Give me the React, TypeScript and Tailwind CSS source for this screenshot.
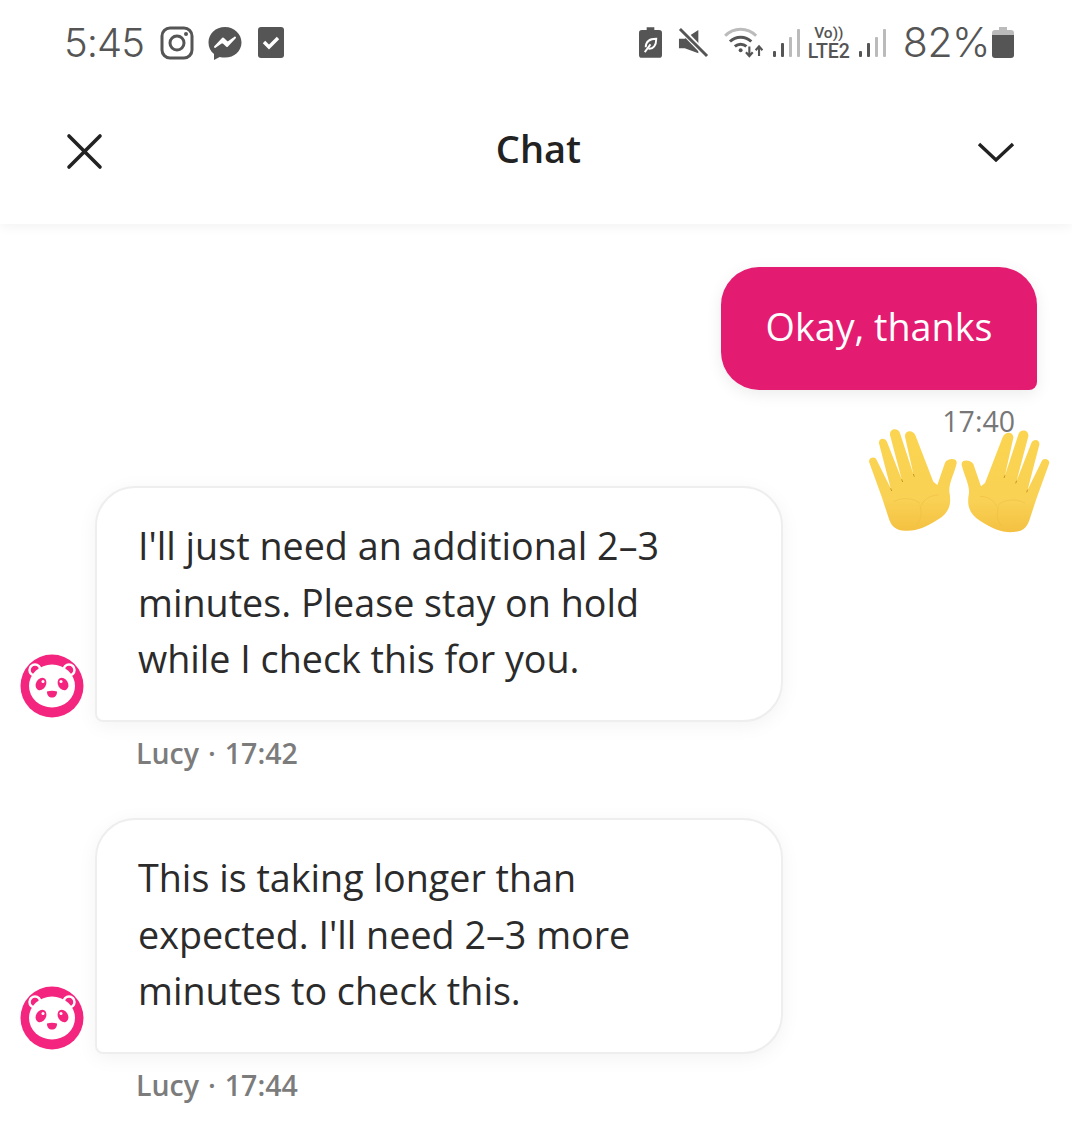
const openSans = "font-['Open_Sans',sans-serif]";

function Instagram() {
  return (
    <svg width="34" height="34" viewBox="0 0 34 34" fill="none" stroke="#555" strokeWidth="3">
      <rect x="2" y="2" width="30" height="30" rx="8" />
      <circle cx="17" cy="17" r="7" />
      <circle cx="26" cy="8" r="2" fill="#555" stroke="none" />
    </svg>
  );
}

function Messenger() {
  return (
    <svg width="36" height="36" viewBox="0 0 36 36">
      <path d="M18 2C8.600 2 1.500 8.800 1.500 17.500c0 4.700 2 8.700 5.500 11.500v6l5.700-3.100c1.700.5 3.400.7 5.300.7 9.400 0 16.500-6.800 16.500-15.100S27.400 2 18 2z" fill="#555" />
      <path d="M8 22l8-8.500 4.500 4.200L28 12.500l-8 8.500-4.500-4.200z" fill="#fff" stroke="#fff" strokeWidth="2" strokeLinejoin="round" />
    </svg>
  );
}

function CheckBox() {
  return (
    <svg width="28" height="33" viewBox="0 0 28 33">
      <rect x="1" y="1" width="26" height="31" rx="3" fill="#555" />
      <path d="M7 16l5 5 9-9" fill="none" stroke="#fff" strokeWidth="3.400" />
    </svg>
  );
}

function BatteryLeaf() {
  return (
    <svg width="23" height="33" viewBox="0 0 24 34">
      <path d="M8 1h8v3h5a3 3 0 0 1 3 3v23a3 3 0 0 1-3 3H3a3 3 0 0 1-3-3V7a3 3 0 0 1 3-3h5z" fill="#555" />
      <path d="M7 22c0-6 4-9 11-9 0 7-3 11-8 10.500M6 27l6-8" fill="none" stroke="#fff" strokeWidth="2" />
    </svg>
  );
}

function Muted() {
  return (
    <svg width="31" height="31" viewBox="0 0 32 32">
      <path d="M1 10h6l14-9v24L7 20H1z" fill="#555" transform="translate(0 2)" />
      <path d="M2 1l28 29" stroke="#fff" strokeWidth="6" />
      <path d="M2 2l28 28" stroke="#555" strokeWidth="3" />
    </svg>
  );
}

function Wifi() {
  return (
    <svg width="41" height="31" viewBox="0 0 42 32" fill="none">
      <path d="M1 9c9-9 23-9 32 0" stroke="#bbb" strokeWidth="3" />
      <path d="M6 15c6-6 16-6 22 0M11 20c3.500-3 8.500-3 12 0" stroke="#555" strokeWidth="3" />
      <circle cx="17" cy="24" r="2" fill="#555" />
      <path d="M26 20v10M22.500 26l3.500 4 3.500-4M36 30V20M32.500 24l3.500-4 3.500 4" stroke="#555" strokeWidth="2.200" />
    </svg>
  );
}

function Signal() {
  return (
    <svg width="28" height="30" viewBox="0 0 28 30">
      <rect x="1" y="23" width="3" height="6" rx="1" fill="#555" />
      <rect x="9" y="15" width="3" height="14" rx="1" fill="#555" />
      <rect x="17" y="9" width="3" height="20" rx="1" fill="#bbb" />
      <rect x="25" y="1" width="3" height="28" rx="1" fill="#bbb" />
    </svg>
  );
}

function BatteryLevel() {
  return (
    <svg width="22" height="31" viewBox="0 0 22 31">
      <path d="M7 0h8v3h4a3 3 0 0 1 3 3v3H0V6a3 3 0 0 1 3-3h4z" fill="#bbb" />
      <path d="M0 8h22v20a3 3 0 0 1-3 3H3a3 3 0 0 1-3-3z" fill="#555" />
    </svg>
  );
}

function StatusBar() {
  return (
    <div className="flex h-[85px] items-center justify-between pl-[64px] pr-[58px] font-['Inter',sans-serif] font-light text-[#555]">
      <div className="flex items-center">
        <span className="text-[40px] leading-none tracking-[-1px]">5:45</span>
        <span className="ml-[16px] flex"><Instagram /></span>
        <span className="ml-[13px] flex"><Messenger /></span>
        <span className="ml-[14px] flex"><CheckBox /></span>
      </div>
      <div className="flex items-center">
        <BatteryLeaf />
        <span className="ml-[16px] flex"><Muted /></span>
        <span className="ml-[15px] flex"><Wifi /></span>
        <span className="ml-[7px] flex"><Signal /></span>
        <div className="ml-[7px] flex w-[44px] flex-col items-center font-['Roboto',sans-serif] font-medium">
          <span className="text-[15.500px] leading-[18px]">Vo))</span>
          <span className="mt-[1px] text-[19.500px] leading-[18px]">LTE2</span>
        </div>
        <span className="ml-[7px] flex"><Signal /></span>
        <span className="ml-[17px] text-[41px] leading-none tracking-[-0.5px]">82%</span>
        <span className="ml-[2px] flex"><BatteryLevel /></span>
      </div>
    </div>
  );
}

function Header() {
  return (
    <header className="relative z-10 bg-white shadow-[0_2px_12px_rgba(0,0,0,0.06)]">
      <StatusBar />
      <div className="flex h-[139px] items-start justify-between pl-[66px] pr-[57px] pt-[48px]">
        <svg width="37" height="37" viewBox="0 0 37 37" fill="none" stroke="#222" strokeWidth="3.600" strokeLinecap="round">
          <path d="M3 3l31 31M34 3L3 34" />
        </svg>
        <span className={`${openSans} -mt-[8px] mr-[3px] text-[38px] font-semibold leading-[46px] text-[#222]`}>Chat</span>
        <svg className="mt-[8px]" width="38" height="22" viewBox="0 0 38 22" fill="none" stroke="#222" strokeWidth="3.400">
          <path d="M2 3l17 16L36 3" />
        </svg>
      </div>
    </header>
  );
}

function PandaAvatar() {
  return (
    <svg width="64" height="64" viewBox="0 0 64 64" className="shrink-0">
      <circle cx="32" cy="32" r="31.500" fill="#f4257f" />
      <circle cx="15" cy="16" r="5.500" fill="#f4257f" stroke="#fff" strokeWidth="2.500" />
      <circle cx="49" cy="16" r="5.500" fill="#f4257f" stroke="#fff" strokeWidth="2.500" />
      <ellipse cx="32" cy="32" rx="23" ry="21.500" fill="#fff" />
      <ellipse cx="21" cy="30" rx="5" ry="6.500" fill="#f4257f" transform="rotate(30 21 30)" />
      <ellipse cx="43" cy="30" rx="5" ry="6.500" fill="#f4257f" transform="rotate(-30 43 30)" />
      <circle cx="23" cy="27.500" r="1.500" fill="#fff" />
      <circle cx="41" cy="27.500" r="1.500" fill="#fff" />
      <path d="M27 37.500c3-1 7-1 10 0 0 4-2 6-5 6s-5-2-5-6z" fill="#f4257f" />
    </svg>
  );
}

function AgentMessage({ lines, time }: { lines: string[]; time: string }) {
  return (
    <div className="pl-5">
      <div className="flex items-end gap-[11px]">
        <div className="mb-[4px]">
          <PandaAvatar />
        </div>
        <div className="h-[236px] w-[688px] rounded-[40px] rounded-bl-[8px] border-2 border-[#eeeeee] bg-white pl-[41px] pt-[30px] text-[37.700px] leading-[56.500px] text-[#2b2b2b] shadow-[0_4px_20px_rgba(0,0,0,0.05)]">
          {lines.map((line) => (
            <div key={line}>{line}</div>
          ))}
        </div>
      </div>
      <div className="ml-[116px] mt-[12px] flex text-[28.500px] font-semibold leading-[38px] text-[#7c7c7c]">
        <span>Lucy</span>
        <span className="mx-[9px]">·</span>
        <span>{time}</span>
      </div>
    </div>
  );
}

function Hand() {
  return (
    <g>
      <path
        d="M57 245C57 232 75 228 80 240L122 325L87 190C85 172 108 172 112 188L155 298L120 165C118 143 146 142 150 160L190 282L165 170C163 150 190 148 197 168L250 305L262 315L285 248C292 235 322 232 320 250C315 275 296 310 298 335C306 375 295 400 265 418C230 442 195 455 165 452C140 452 125 440 118 420L95 350Z"
        fill="url(#handFill)"
      />
      <path d="M130 365c30-15 60-10 80 5M215 375c5-15 25-30 50-30M210 375c5 25 5 40-10 60" fill="none" stroke="#eebb42" strokeWidth="3" opacity="0.500" />
      <path d="M122 325l3 8M155 298l3 8M190 282l3 8" stroke="#b98a1f" strokeWidth="2.500" />
    </g>
  );
}

function Hands() {
  return (
    <svg className="absolute left-[850px] top-[380px]" width="222" height="170" viewBox="0 0 666 510">
      <defs>
        <linearGradient id="handFill" x1="0" y1="0" x2="0" y2="1">
          <stop offset="0" stopColor="#fbd550" />
          <stop offset="0.700" stopColor="#f9d154" />
          <stop offset="1" stopColor="#f4c142" />
        </linearGradient>
      </defs>
      <Hand />
      <g transform="translate(655 4) scale(-1 1)">
        <Hand />
      </g>
    </svg>
  );
}

export default function App() {
  return (
    <div className={`relative h-[1129px] w-[1072px] overflow-hidden bg-white ${openSans}`}>
      <Header />
      <main>
        <div className="flex flex-col items-end pr-[35px] pt-[43px]">
          <div className="flex h-[123px] w-[316px] items-center justify-center rounded-[38px] rounded-br-[8px] bg-[#e31c72] pb-[2px] text-[37.700px] text-white shadow-[0_4px_16px_rgba(0,0,0,0.08)]">
            Okay, thanks
          </div>
          <div className="mr-[22px] mt-[12px] text-[28.500px] leading-[38px] text-[#777]">17:40</div>
        </div>
        <div className="mt-[46px] flex flex-col gap-[46px]">
          <AgentMessage lines={["I'll just need an additional 2–3", "minutes. Please stay on hold", "while I check this for you."]} time="17:42" />
          <AgentMessage lines={["This is taking longer than", "expected. I'll need 2–3 more", "minutes to check this."]} time="17:44" />
        </div>
      </main>
      <Hands />
    </div>
  );
}
